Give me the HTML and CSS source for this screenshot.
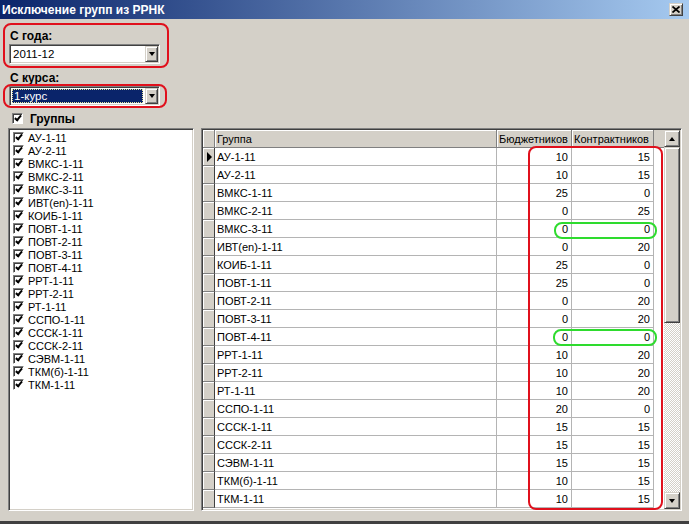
FILE: index.html
```html
<!DOCTYPE html>
<html lang="ru">
  <head>
    <meta charset="UTF-8" />
    <title>Исключение групп из РРНК</title>
    <link rel="stylesheet" href="styles.css">
  </head>
  <body>
    <div class="window">
      <div class="titlebar">
        <span class="title">Исключение групп из РРНК</span>
        <span class="close-btn">
          <svg width="8" height="7" viewBox="0 0 8 7"><path d="M0.5 0.5 L7.5 6.5 M7.5 0.5 L0.5 6.5" stroke="#000" stroke-width="1.7" /></svg>
        </span>
      </div>

      <div class="content">
        <div class="field-label">С года:</div>
        <div class="combo">
          <span class="combo-text">2011-12</span>
          <span class="combo-btn"><span class="arrow-down"></span></span>
        </div>

        <div class="field-label second">С курса:</div>
        <div class="combo focused">
          <span class="combo-text">1-курс</span>
          <span class="combo-btn"><span class="arrow-down"></span></span>
        </div>

        <div class="groups-toggle">
          <span class="check"></span>
          Группы
        </div>

        <div class="panels">
          <div class="group-list" id="group-list"></div>

          <div class="grid">
            <div class="grid-cells" id="grid-cells">
              <div class="hcell"></div>
              <div class="hcell">Группа</div>
              <div class="hcell">Бюджетников</div>
              <div class="hcell">Контрактников</div>
              <div class="hcell filler"></div>
            </div>
            <div class="scrollbar">
              <div class="sb-btn"><span class="arrow-up"></span></div>
              <div class="sb-thumb"></div>
              <div class="sb-track"></div>
              <div class="sb-btn"><span class="arrow-down"></span></div>
            </div>
          </div>
        </div>
      </div>

      <!-- hand-drawn marks on the screenshot -->
      <div class="mark red mark-year"></div>
      <div class="mark red mark-course"></div>
      <div class="mark red mark-values"></div>
      <div class="mark green mark-zero1"></div>
      <div class="mark green mark-zero2"></div>
    </div>

    <script>
      const groups = [
        ["АУ-1-11", 10, 15],
        ["АУ-2-11", 10, 15],
        ["ВМКС-1-11", 25, 0],
        ["ВМКС-2-11", 0, 25],
        ["ВМКС-3-11", 0, 0],
        ["ИВТ(en)-1-11", 0, 20],
        ["КОИБ-1-11", 25, 0],
        ["ПОВТ-1-11", 25, 0],
        ["ПОВТ-2-11", 0, 20],
        ["ПОВТ-3-11", 0, 20],
        ["ПОВТ-4-11", 0, 0],
        ["РРТ-1-11", 10, 20],
        ["РРТ-2-11", 10, 20],
        ["РТ-1-11", 10, 20],
        ["ССПО-1-11", 20, 0],
        ["СССК-1-11", 15, 15],
        ["СССК-2-11", 15, 15],
        ["СЭВМ-1-11", 15, 15],
        ["ТКМ(б)-1-11", 10, 15],
        ["ТКМ-1-11", 10, 15],
      ];

      const list = document.getElementById("group-list");
      const cells = document.getElementById("grid-cells");

      groups.forEach((g, i) => {
        list.insertAdjacentHTML(
          "beforeend",
          `<div class="list-item"><span class="check"></span>${g[0]}</div>`
        );
        cells.insertAdjacentHTML(
          "beforeend",
          `<div class="ind">${i === 0 ? '<span class="pointer"></span>' : ""}</div>` +
            `<div class="cell">${g[0]}</div>` +
            `<div class="cell num">${g[1]}</div>` +
            `<div class="cell num">${g[2]}</div>` +
            `<div class="cell filler"></div>`
        );
      });
    </script>
  </body>
</html>
```

FILE: styles.css
```css
body {
  margin: 0;
  background: #d4d0c8;
  font-family: "Liberation Sans", Arial, sans-serif;
  font-size: 11px;
  color: #000;
}
.window {
  position: relative;
  width: 689px;
  height: 524px;
  box-sizing: border-box;
  border-bottom: 3px solid #404040;
  display: flex;
  flex-direction: column;
  overflow: hidden;
}
.titlebar {
  flex: none;
  height: 19px;
  display: flex;
  align-items: center;
  justify-content: space-between;
  padding: 0 6px 0 2px;
  background: linear-gradient(to right, #0a246a, #a6caf0);
  color: #fff;
  font-size: 12px;
  font-weight: bold;
}
.close-btn,
.combo-btn,
.sb-btn,
.sb-thumb,
.hcell,
.ind {
  box-sizing: border-box;
  background: #d4d0c8;
}
.close-btn,
.combo-btn,
.sb-btn,
.sb-thumb {
  border: 1px solid;
  border-color: #d4d0c8 #404040 #404040 #d4d0c8;
  box-shadow: inset 1px 1px #fff, inset -1px -1px #808080;
  display: flex;
  align-items: center;
  justify-content: center;
}
.close-btn {
  width: 14px;
  height: 13px;
}
.content {
  flex: 1;
  display: flex;
  flex-direction: column;
  padding: 11px 7px 0 8px;
}
.field-label {
  font-size: 12px;
  font-weight: bold;
  line-height: 13px;
  padding-left: 2px;
}
.field-label.second {
  margin-top: 8px;
}
.combo,
.group-list,
.grid {
  box-sizing: border-box;
  border: 1px solid;
  border-color: #808080 #fff #fff #808080;
  box-shadow: inset 1px 1px #404040, inset -1px -1px #d4d0c8;
}
.combo {
  display: flex;
  width: 151px;
  height: 20px;
  margin: 1px 0 0 1px;
  padding: 2px;
  background: #fff;
  font-size: 11.5px;
}
.combo-text {
  flex: 1;
  line-height: 14px;
  padding-left: 1px;
}
.combo.focused .combo-text {
  margin-right: 2px;
  padding-left: 2px;
  background: #0a246a;
  color: #fff;
  outline: 1px dotted #e6e29a;
  outline-offset: -1px;
}
.combo-btn {
  width: 13px;
  margin: -1px -1px -1px 0;
}
.arrow-down,
.arrow-up {
  width: 0;
  height: 0;
  border-left: 3.5px solid transparent;
  border-right: 3.5px solid transparent;
}
.arrow-down {
  border-top: 4px solid #000;
}
.arrow-up {
  border-bottom: 4px solid #000;
}
.groups-toggle {
  display: flex;
  align-items: center;
  gap: 7px;
  height: 13px;
  margin-top: 6px;
  padding-left: 4px;
  font-size: 12px;
  font-weight: bold;
}
.check {
  position: relative;
  flex: none;
  width: 11px;
  height: 11px;
  box-sizing: border-box;
  background: #fff;
  border: 1px solid;
  border-color: #808080 #fff #fff #808080;
  box-shadow: inset 1px 1px #404040;
}
.check::after {
  content: "";
  position: absolute;
  left: 3px;
  top: 0px;
  width: 2px;
  height: 5px;
  border: solid #000;
  border-width: 0 2px 2px 0;
  transform: rotate(40deg);
}
.panels {
  display: flex;
  gap: 7px;
  height: 383px;
  margin-top: 3px;
}
.group-list {
  width: 186px;
  background: #fff;
  padding: 2px 0 0 4px;
}
.list-item {
  display: flex;
  align-items: center;
  gap: 4px;
  height: 13px;
}
.grid {
  flex: 1;
  display: flex;
  padding: 1px;
  background: #fff;
}
.grid-cells {
  flex: 1;
  display: grid;
  grid-template-columns: 12px 282px 75px 82px 1fr;
  grid-auto-rows: 18px;
  align-content: start;
}
.hcell {
  display: flex;
  align-items: center;
  padding: 0 2px;
  border-right: 1px solid #808080;
  border-bottom: 1px solid #808080;
  box-shadow: inset 1px 1px #fff;
  white-space: nowrap;
  overflow: hidden;
}
.hcell.filler {
  border-right: none;
  box-shadow: none;
}
.ind {
  display: flex;
  align-items: center;
  justify-content: center;
  border-right: 1px solid #404040;
  border-bottom: 1px solid #808080;
  box-shadow: inset 1px 1px #fff;
}
.pointer {
  width: 0;
  height: 0;
  border-top: 5px solid transparent;
  border-bottom: 5px solid transparent;
  border-left: 5px solid #000;
  margin-left: 1px;
}
.cell {
  display: flex;
  align-items: center;
  padding: 0 2px;
  border-right: 1px solid #b4b4b4;
  border-bottom: 1px solid #b4b4b4;
  box-sizing: border-box;
  white-space: nowrap;
}
.cell.num {
  justify-content: flex-end;
  padding-right: 3px;
}
.cell.filler {
  border: none;
}
.scrollbar {
  width: 16px;
  display: flex;
  flex-direction: column;
}
.sb-btn {
  height: 17px;
}
.sb-thumb {
  height: 176px;
}
.sb-track {
  flex: 1;
  background: repeating-conic-gradient(#fff 0 25%, #d4d0c8 0 50%);
  background-size: 2px 2px;
}
.mark {
  position: absolute;
  box-sizing: border-box;
  border: 2px solid;
  border-radius: 8px;
}
.mark.red {
  border-color: #e0101c;
}
.mark.green {
  border-color: #2edb2e;
}
.mark-year {
  left: 3px;
  top: 23px;
  width: 166px;
  height: 45px;
}
.mark-course {
  left: 3px;
  top: 84px;
  width: 164px;
  height: 24px;
}
.mark-values {
  left: 528px;
  top: 146px;
  width: 135px;
  height: 364px;
}
.mark-zero1 {
  left: 554px;
  top: 222px;
  width: 103px;
  height: 17px;
}
.mark-zero2 {
  left: 553px;
  top: 329px;
  width: 104px;
  height: 17px;
}
```
